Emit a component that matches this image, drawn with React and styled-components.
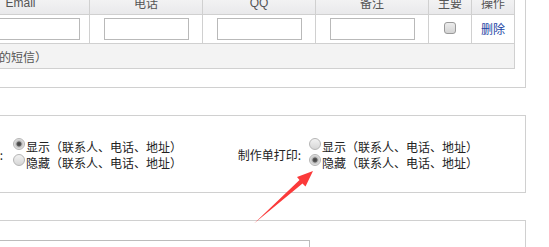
import React from 'react';
import styled, { createGlobalStyle } from 'styled-components';

const GlobalStyle = createGlobalStyle`
	html, body {
		margin: 0;
		padding: 0;
		background: #fff;
		overflow: hidden;
	}
	body {
		font-family: 'Liberation Sans', 'Noto Sans CJK SC', sans-serif;
		font-size: 12px;
		color: #333;
	}
`;

// the screenshot is a crop of a wider page, so the page starts up and left of the window
const Page = styled.div`
	margin: -21px 0 0 -60px;
	width: 586px;
	display: flex;
	flex-direction: column;
	gap: 27px;
`;

const Panel = styled.div`
	border: 1px solid #d0d0d0;
	padding: ${({ pad }) => pad || '0'};
	height: ${({ h }) => (h ? `${h}px` : 'auto')};
	box-sizing: border-box;
`;

const Grid = styled.div`
	display: grid;
	grid-template-columns: 138px 113px 113px 113px 43px 43px;
	border-left: 1px solid #d0d0d0;
	border-top: 1px solid #d0d0d0;
`;

const Head = styled.div`
	height: 24px;
	box-sizing: border-box;
	border-right: 1px solid #d0d0d0;
	border-bottom: 1px solid #d0d0d0;
	background: linear-gradient(#f8f8f8, #e9e9eb);
	color: #555;
	display: flex;
	align-items: center;
	justify-content: center;
`;

const Cell = styled.div`
	height: 29px;
	box-sizing: border-box;
	border-right: 1px solid #d0d0d0;
	border-bottom: 1px solid #d0d0d0;
	display: flex;
	align-items: center;
	justify-content: center;
`;

const Note = styled.div`
	grid-column: 1 / -1;
	height: 25px;
	box-sizing: border-box;
	border-right: 1px solid #d0d0d0;
	border-bottom: 1px solid #d0d0d0;
	background: #f3f3f3;
	color: #555;
	display: flex;
	align-items: center;
	padding-left: 11px;
`;

const Input = styled.input`
	width: ${({ w }) => w}px;
	height: 22px;
	box-sizing: border-box;
	border: 1px solid #b9b9b9;
	margin: 0 0 1px;
	padding: 0 3px;
	background: #fff;
	outline: none;
`;

const Check = styled.span`
	width: 12px;
	height: 12px;
	box-sizing: border-box;
	border: 1px solid #9a9a9a;
	border-radius: 3px;
	background: linear-gradient(#ececec, #d3d3d3);
	margin-bottom: 2px;
`;

const DelLink = styled.a`
	color: #1a43a3;
	text-decoration: none;
	font-family: 'Noto Sans CJK SC', sans-serif;
	margin-bottom: 2px;
`;

const OptionsRow = styled.div`
	display: flex;
	align-items: center;
	height: 100%;
`;

const Label = styled.div`
	flex: none;
	width: 80px;
	box-sizing: border-box;
	padding-right: 8px;
	text-align: right;
	color: #222;
	white-space: nowrap;
	margin-left: ${({ shift }) => shift || 0}px;
	margin-top: 1px;
	font-family: 'Noto Sans CJK SC', sans-serif;
`;

const Group = styled.div`
	display: flex;
	flex-direction: column;
	margin-left: ${({ shift }) => shift || 0}px;
	margin-right: ${({ gap }) => gap || 0}px;
`;

const Option = styled.label`
	display: flex;
	align-items: center;
	height: 16px;
	white-space: nowrap;
	color: #222;
	font-family: 'Noto Sans CJK SC', sans-serif;
`;

const Radio = styled.span`
	width: 12px;
	height: 12px;
	box-sizing: border-box;
	border-radius: 50%;
	border: 1px solid #b5b5b5;
	background: ${({ on }) =>
		on
			? 'radial-gradient(circle, #3d3d3d 0, #5a5a5a 2px, #bdbdbd 3px, #e6e6e6 5px)'
			: 'linear-gradient(#f2f2f2, #d6d6d6)'};
	margin: 0 1px 4px 0;
	flex: none;
`;

const InnerBox = styled.div`
	width: 358px;
	height: 40px;
	border: 1px solid #bcbcbc;
	margin-left: -1px;
`;

const Arrow = styled.svg`
	position: absolute;
	left: 0;
	top: 0;
	pointer-events: none;
`;

const columns = ['Email', '电话', 'QQ', '备注', '主要', '操作'];

const Choice = ({ checked, shift, gap }) => (
	<Group shift={shift} gap={gap}>
		<Option>
			<Radio on={checked === 0} />
			显示（联系人、电话、地址）
		</Option>
		<Option>
			<Radio on={checked === 1} />
			隐藏（联系人、电话、地址）
		</Option>
	</Group>
);

const App = () => (
	<>
		<GlobalStyle />
		<Page>
			<Panel pad="10px 10px 18px 10px">
				<Grid>
					{columns.map((c) => (
						<Head key={c}>{c}</Head>
					))}
					<Cell>
						<Input w={119} />
					</Cell>
					<Cell>
						<Input w={85} />
					</Cell>
					<Cell>
						<Input w={85} />
					</Cell>
					<Cell>
						<Input w={85} />
					</Cell>
					<Cell>
						<Check />
					</Cell>
					<Cell>
						<DelLink href="#">删除</DelLink>
					</Cell>
					<Note>（接收的短信）</Note>
				</Grid>
			</Panel>
			<Panel h={78} pad="0 0 0 1px">
				<OptionsRow>
					<Label shift={-11}>发货单打印:</Label>
					<Choice checked={0} shift={2} gap={47} />
					<Label>制作单打印:</Label>
					<Choice checked={1} />
				</OptionsRow>
			</Panel>
			<Panel pad="19px 0 0 10px" h={60}>
				<InnerBox />
			</Panel>
		</Page>
		<Arrow width="549" height="247" viewBox="0 0 549 247">
			<polygon
				points="254,223.5 299.5,180 297,177 313,171 305.5,186.5 302.5,183.5"
				fill="#fb3a3a"
			/>
		</Arrow>
	</>
);

export default App;
